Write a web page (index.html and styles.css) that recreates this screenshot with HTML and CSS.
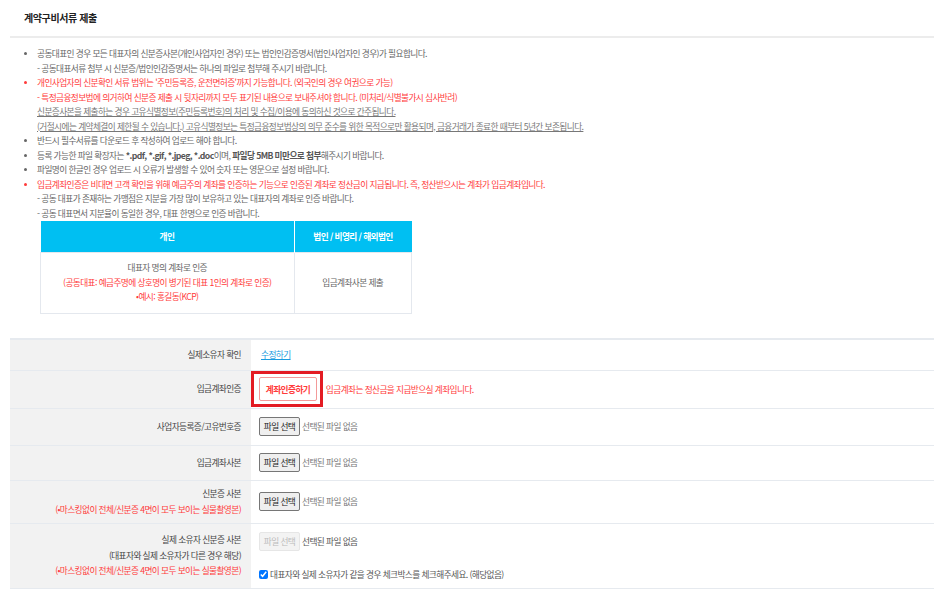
FILE: index.html
```html
<!DOCTYPE html>
<html lang="ko">
<head>
  <meta charset="UTF-8">
  <meta name="viewport" content="width=device-width, initial-scale=1.0">
  <title>계약구비서류 제출</title>
  <link rel="stylesheet" href="styles.css">
</head>
<body>
  <div class="page">
    <!-- 제목 -->
    <h3 class="sec-title">계약구비서류 제출</h3>

    <!-- 안내 문구 -->
    <ul class="notice">
      <li>공동대표인 경우 모든 대표자의 신분증사본(개인사업자인 경우) 또는 법인인감증명서(법인사업자인 경우)가 필요합니다.
        <p>- 공동대표서류 첨부 시 신분증/법인인감증명서는 하나의 파일로 첨부해 주시기 바랍니다.</p>
      </li>
      <li class="red">개인사업자의 신분확인 서류 범위는 '주민등록증, 운전면허증'까지 가능합니다. (외국인의 경우 여권으로 가능)
        <p>- 특정금융정보법에 의거하여 신분증 제출 시 뒷자리까지 모두 표기된 내용으로 보내주셔야 합니다. (미처리/식별불가시 심사반려)</p>
        <p class="agree">신분증사본을 제출하는 경우 고유식별정보(주민등록번호)의 처리 및 수집/이용에 동의하신 것으로 간주됩니다.</p>
        <p class="agree">(거절시에는 계약체결이 제한될 수 있습니다.) 고유식별정보는 특정금융정보법상의 의무 준수를 위한 목적으로만 활용되며, 금융거래가 종료한 때부터 5년간 보존됩니다.</p>
      </li>
      <li>반드시 필수서류를 다운로드 후 작성하여 업로드 해야 합니다.</li>
      <li>등록 가능한 파일 확장자는 <b>*.pdf, *.gif, *.jpeg, *.doc</b>이며, <b>파일당 5MB 미만으로 첨부</b>해주시기 바랍니다.</li>
      <li>파일명이 한글인 경우 업로드 시 오류가 발생할 수 있어 숫자 또는 영문으로 설정 바랍니다.</li>
      <li class="red">입금계좌인증은 비대면 고객 확인을 위해 예금주의 계좌를 인증하는 기능으로 인증된 계좌로 정산금이 지급됩니다. 즉, 정산받으시는 계좌가 입금계좌입니다.
        <p class="gray">- 공동 대표가 존재하는 가맹점은 지분을 가장 많이 보유하고 있는 대표자의 계좌로 인증 바랍니다.</p>
        <p class="gray">- 공동 대표면서 지분율이 동일한 경우, 대표 한명으로 인증 바랍니다.</p>
      </li>
    </ul>

    <!-- 계좌 인증 기준 -->
    <table class="acct-table">
      <thead>
        <tr>
          <th class="col-personal">개인</th>
          <th>법인 / 비영리 / 해외법인</th>
        </tr>
      </thead>
      <tbody>
        <tr>
          <td>
            대표자 명의 계좌로 인증<br>
            <span class="red">(공동대표: 예금주명에 상호명이 병기된 대표 1인의 계좌로 인증)</span><br>
            <span class="red">•예시: 홍길동(KCP)</span>
          </td>
          <td>입금계좌사본 제출</td>
        </tr>
      </tbody>
    </table>

    <!-- 서류 업로드 -->
    <table class="form-table">
      <tr class="row-owner">
        <th>실제소유자 확인</th>
        <td><a href="#" class="link">수정하기</a></td>
      </tr>
      <tr class="row-auth">
        <th>입금계좌인증</th>
        <td>
          <span class="mark"><button type="button" class="btn-auth">계좌인증하기</button></span>
          <span class="red">입금계좌는 정산금을 지급받으실 계좌입니다.</span>
        </td>
      </tr>
      <tr class="row-file">
        <th>사업자등록증/고유번호증</th>
        <td><button type="button" class="btn-file">파일 선택</button><span class="file-name">선택된 파일 없음</span></td>
      </tr>
      <tr class="row-file2">
        <th>입금계좌사본</th>
        <td><button type="button" class="btn-file">파일 선택</button><span class="file-name">선택된 파일 없음</span></td>
      </tr>
      <tr class="row-id">
        <th>신분증 사본<br><span class="red">(•마스킹없이 전체/신분증 4면이 모두 보이는 실물촬영본)</span></th>
        <td><button type="button" class="btn-file">파일 선택</button><span class="file-name">선택된 파일 없음</span></td>
      </tr>
      <tr class="row-real">
        <th>실제 소유자 신분증 사본<br>(대표자와 실제 소유자가 다른 경우 해당)<br><span class="red">(•마스킹없이 전체/신분증 4면이 모두 보이는 실물촬영본)</span></th>
        <td>
          <div class="file-line"><button type="button" class="btn-file" disabled>파일 선택</button><span class="file-name dark">선택된 파일 없음</span></div>
          <label class="same-check"><input type="checkbox" checked>대표자와 실제 소유자가 같을 경우 체크박스를 체크해주세요. (해당없음)</label>
        </td>
      </tr>
    </table>
  </div>
</body>
</html>
```

FILE: styles.css
```css
body {
  margin: 0;
  padding: 0;
  background: #fff;
  color: #666;
  font-family: "Noto Sans CJK KR", "Noto Sans", sans-serif;
  font-size: 8.7px;
  letter-spacing: -0.6px;
}
.page {
  padding-left: 10px;
}
.red {
  color: #ff3b3b;
}
.gray {
  color: #666;
}

/* 제목 */
.sec-title {
  margin: 0;
  padding-left: 14px;
  line-height: 36px;
  font-size: 10px;
  font-weight: bold;
  color: #222;
  letter-spacing: -0.4px;
  border-bottom: 2px solid #ececec;
}

/* 안내 문구 */
.notice {
  margin: 9px 0 0;
  padding-left: 27px;
  line-height: 14.5px;
}
.notice li::marker {
  font-size: 8px;
}
.notice p {
  margin: 0;
}
.notice b {
  color: #555;
}
.notice .agree {
  color: #777;
  text-decoration: underline;
}

/* 계좌 인증 기준 */
.acct-table {
  margin: 0 0 0 30px;
  width: 372px;
  border-collapse: collapse;
  text-align: center;
}
.acct-table th {
  height: 31px;
  padding: 0;
  background: #00bff2;
  color: #fff;
  font-weight: bold;
  border-right: 1px solid #fff;
}
.acct-table th:last-child {
  border-right: none;
}
.acct-table .col-personal {
  width: 253px;
}
.acct-table td {
  height: 60px;
  padding: 0;
  line-height: 14.6px;
  border: 1px solid #e4e8ee;
}

/* 서류 업로드 */
.form-table {
  margin-top: 24px;
  width: 924px;
  border-collapse: collapse;
  border-top: 2px solid #e6eaef;
}
.form-table th {
  width: 231px;
  padding: 0 10px 0 0;
  background: #f2f2f2;
  color: #444;
  font-weight: normal;
  text-align: right;
  line-height: 15.5px;
  border-bottom: 1px solid #e6eaef;
}
.form-table td {
  padding: 0 0 0 8px;
  border-bottom: 1px solid #e6eaef;
}
.row-owner { height: 31px; }
.row-auth { height: 38px; }
.row-file { height: 37px; }
.row-file2 { height: 35px; }
.row-id { height: 43px; }
.row-real { height: 65px; }

.link {
  color: #1a9be0;
  text-decoration: underline;
  margin-left: 2px;
}
.mark {
  display: inline-block;
  margin-left: -8px;
  padding: 3px 3px 3px 5px;
  border: 3px solid #e31b23;
  vertical-align: middle;
}
.btn-auth {
  display: block;
  width: 58px;
  height: 24px;
  padding: 0;
  background: #fff;
  border: 1px solid #f39a9a;
  border-radius: 2px;
  color: #ff3b3b;
  font-family: inherit;
  font-size: 8.7px;
  font-weight: bold;
  letter-spacing: -0.6px;
}
.row-auth .red {
  vertical-align: middle;
  margin-left: 1px;
}
.btn-file {
  width: 41px;
  height: 19px;
  padding: 0;
  background: #efefef;
  border: 1px solid #767676;
  border-radius: 2px;
  color: #222;
  font-family: inherit;
  font-size: 8.7px;
  letter-spacing: -0.6px;
  vertical-align: middle;
}
.btn-file:disabled {
  background: #f3f3f3;
  border-color: #e6e6e6;
  color: #bbb;
}
.file-name {
  margin-left: 2px;
  color: #777;
  vertical-align: middle;
}
.file-name.dark {
  color: #555;
}
.file-line {
  margin-top: 2px;
}
.same-check {
  display: flex;
  align-items: center;
  margin-top: 17px;
  color: #555;
}
.same-check input {
  width: 9px;
  height: 9px;
  margin: 0 2px 0 0;
}
```
